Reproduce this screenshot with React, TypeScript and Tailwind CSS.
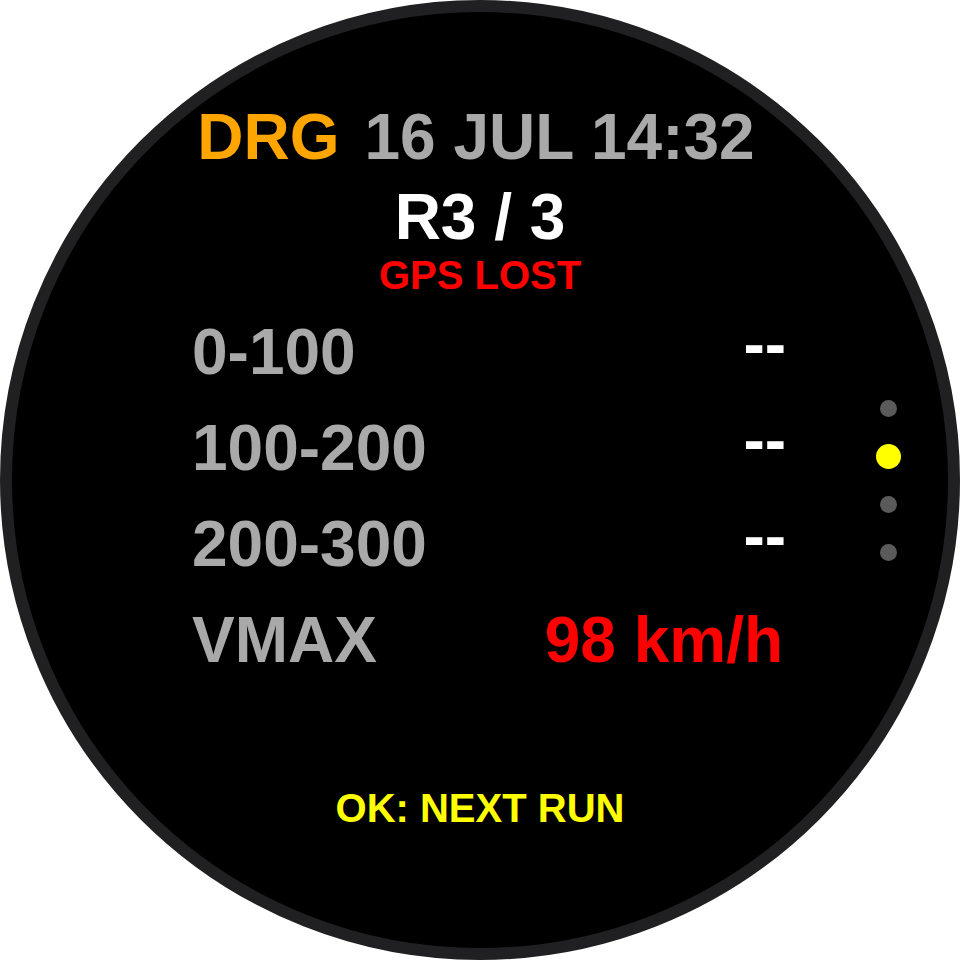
const rows = [
  { label: "0-100", value: "--", tone: "relative -top-[8px] text-white" },
  { label: "100-200", value: "--", tone: "relative -top-[8px] text-white" },
  { label: "200-300", value: "--", tone: "relative -top-[8px] text-white" },
  { label: "VMAX", value: "98 km/h", tone: "pr-[3px] text-[#ff0000]" },
];

const pages = [false, true, false, false];

export default function App() {
  return (
    <div className="h-[960px] w-[960px] bg-white font-['Liberation_Sans',Arial,sans-serif] font-bold">
      <div className="relative flex h-[960px] w-[960px] flex-col items-center rounded-full border-[12px] border-[#202022] bg-black pt-[93px]">
        <div className="mr-[8px] flex gap-[25px] text-[64px] leading-none whitespace-nowrap">
          <span className="text-[#ffa500]">DRG</span>
          <span className="text-[#a9a9a9]">16 JUL 14:32</span>
        </div>
        <div className="mt-[16px] text-[64px] leading-none text-white">R3 / 3</div>
        <div className="mt-[6px] text-[40px] leading-none text-[#ff0000]">GPS LOST</div>

        <div className="mt-[25px] ml-[180px] flex w-[594px] flex-col gap-[32px] self-start">
          {rows.map((row) => (
            <div key={row.label} className="flex items-start justify-between text-[64px] leading-none">
              <span className="text-[#a9a9a9]">{row.label}</span>
              <span className={row.tone}>{row.value}</span>
            </div>
          ))}
        </div>

        <div className="mt-[116px] text-[40px] leading-none text-[#ffff00]">OK: NEXT RUN</div>

        {/* page indicator */}
        <div className="absolute top-[388px] right-[47px] flex w-[25px] flex-col items-center gap-[31px]">
          {pages.map((active, i) =>
            active ? (
              <span key={i} className="-my-[4px] h-[25px] w-[25px] rounded-full bg-[#ffff00]" />
            ) : (
              <span key={i} className="h-[17px] w-[17px] rounded-full bg-[#5a5a5a]" />
            )
          )}
        </div>
      </div>
    </div>
  );
}
